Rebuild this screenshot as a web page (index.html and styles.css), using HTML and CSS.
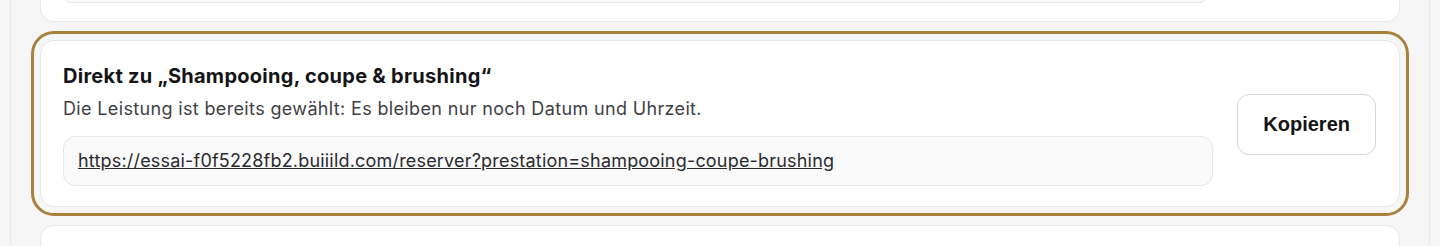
FILE: index.html
```html
<!DOCTYPE html>
<html lang="de">
<head>
    <meta charset="UTF-8">
    <meta name="viewport" content="width=device-width, initial-scale=1.0">
    <title>Direktlinks</title>
    <link rel="stylesheet" href="styles.css">
</head>
<body>
    <div class="panel">
        <div class="link-list">
            <!-- Ende der vorherigen Karte (nach oben gescrollt) -->
            <div class="link-card card-tail">
                <div class="link-box box-tail"></div>
            </div>

            <div class="link-card active">
                <div class="link-info">
                    <h3 class="link-title">Direkt zu „Shampooing, coupe &amp; brushing“</h3>
                    <p class="link-text">Die Leistung ist bereits gewählt: Es bleiben nur noch Datum und Uhrzeit.</p>
                    <div class="link-box">
                        <a href="#" class="link-url">https://essai-f0f5228fb2.buiiild.com/reserver?prestation=shampooing-coupe-brushing</a>
                    </div>
                </div>
                <button class="copy-button">Kopieren</button>
            </div>

            <!-- Anfang der nächsten Karte -->
            <div class="link-card card-head"></div>
        </div>
    </div>
</body>
</html>
```

FILE: styles.css
```css
body {
    margin: 0;
    height: 246px;
    overflow: hidden;
    background-color: #f6f6f6;
    font-family: Inter, "Noto Sans", sans-serif;
}

.panel {
    margin: 0 10px;
    padding: 0 29px;
    border-left: 1px solid #e7e7e7;
    border-right: 1px solid #e7e7e7;
    min-height: 246px;
}

.link-list {
    display: flex;
    flex-direction: column;
    gap: 18px;
}

.link-card {
    display: flex;
    align-items: center;
    gap: 24px;
    background: #fff;
    border: 1px solid #e8e8e8;
    border-radius: 14px;
    padding: 22px 23px 20px 22px;
}

.link-card.active {
    outline: 3px solid #a8813d;
    outline-offset: 6px;
}

.link-info {
    flex: 1;
    min-width: 0;
}

.link-title {
    margin: 0 0 7px;
    font-size: 20px;
    line-height: 26px;
    font-weight: 700;
    letter-spacing: 0.27px;
    color: #141416;
}

.link-text {
    margin: 0 0 14px;
    font-size: 18px;
    line-height: 26px;
    letter-spacing: 0.35px;
    color: #3f3f46;
}

.link-box {
    background: #fafafa;
    border: 1px solid #e6e6e6;
    border-radius: 12px;
    padding: 12px 14px;
}

.link-url {
    font-size: 18px;
    line-height: 24px;
    letter-spacing: 0.19px;
    color: #2a2a2e;
    text-decoration: underline;
}

.copy-button {
    height: 61px;
    padding: 0 25px;
    background: #fff;
    border: 1px solid #d6d6d6;
    border-radius: 12px;
    font-family: "Liberation Sans", Arial, sans-serif;
    font-size: 20px;
    font-weight: 700;
    color: #141416;
    cursor: pointer;
}

/* Reste der Nachbarkarten */
.card-tail {
    display: block;
    height: 21px;
    padding: 0 192px 0 22px;
    border-top: none;
    border-radius: 0 0 14px 14px;
    overflow: hidden;
}

.card-tail .box-tail {
    height: 12px;
    margin-top: -11px;
    padding: 0;
}

.card-head {
    height: 60px;
    padding: 0;
    border-bottom: none;
    border-radius: 14px 14px 0 0;
}
```
